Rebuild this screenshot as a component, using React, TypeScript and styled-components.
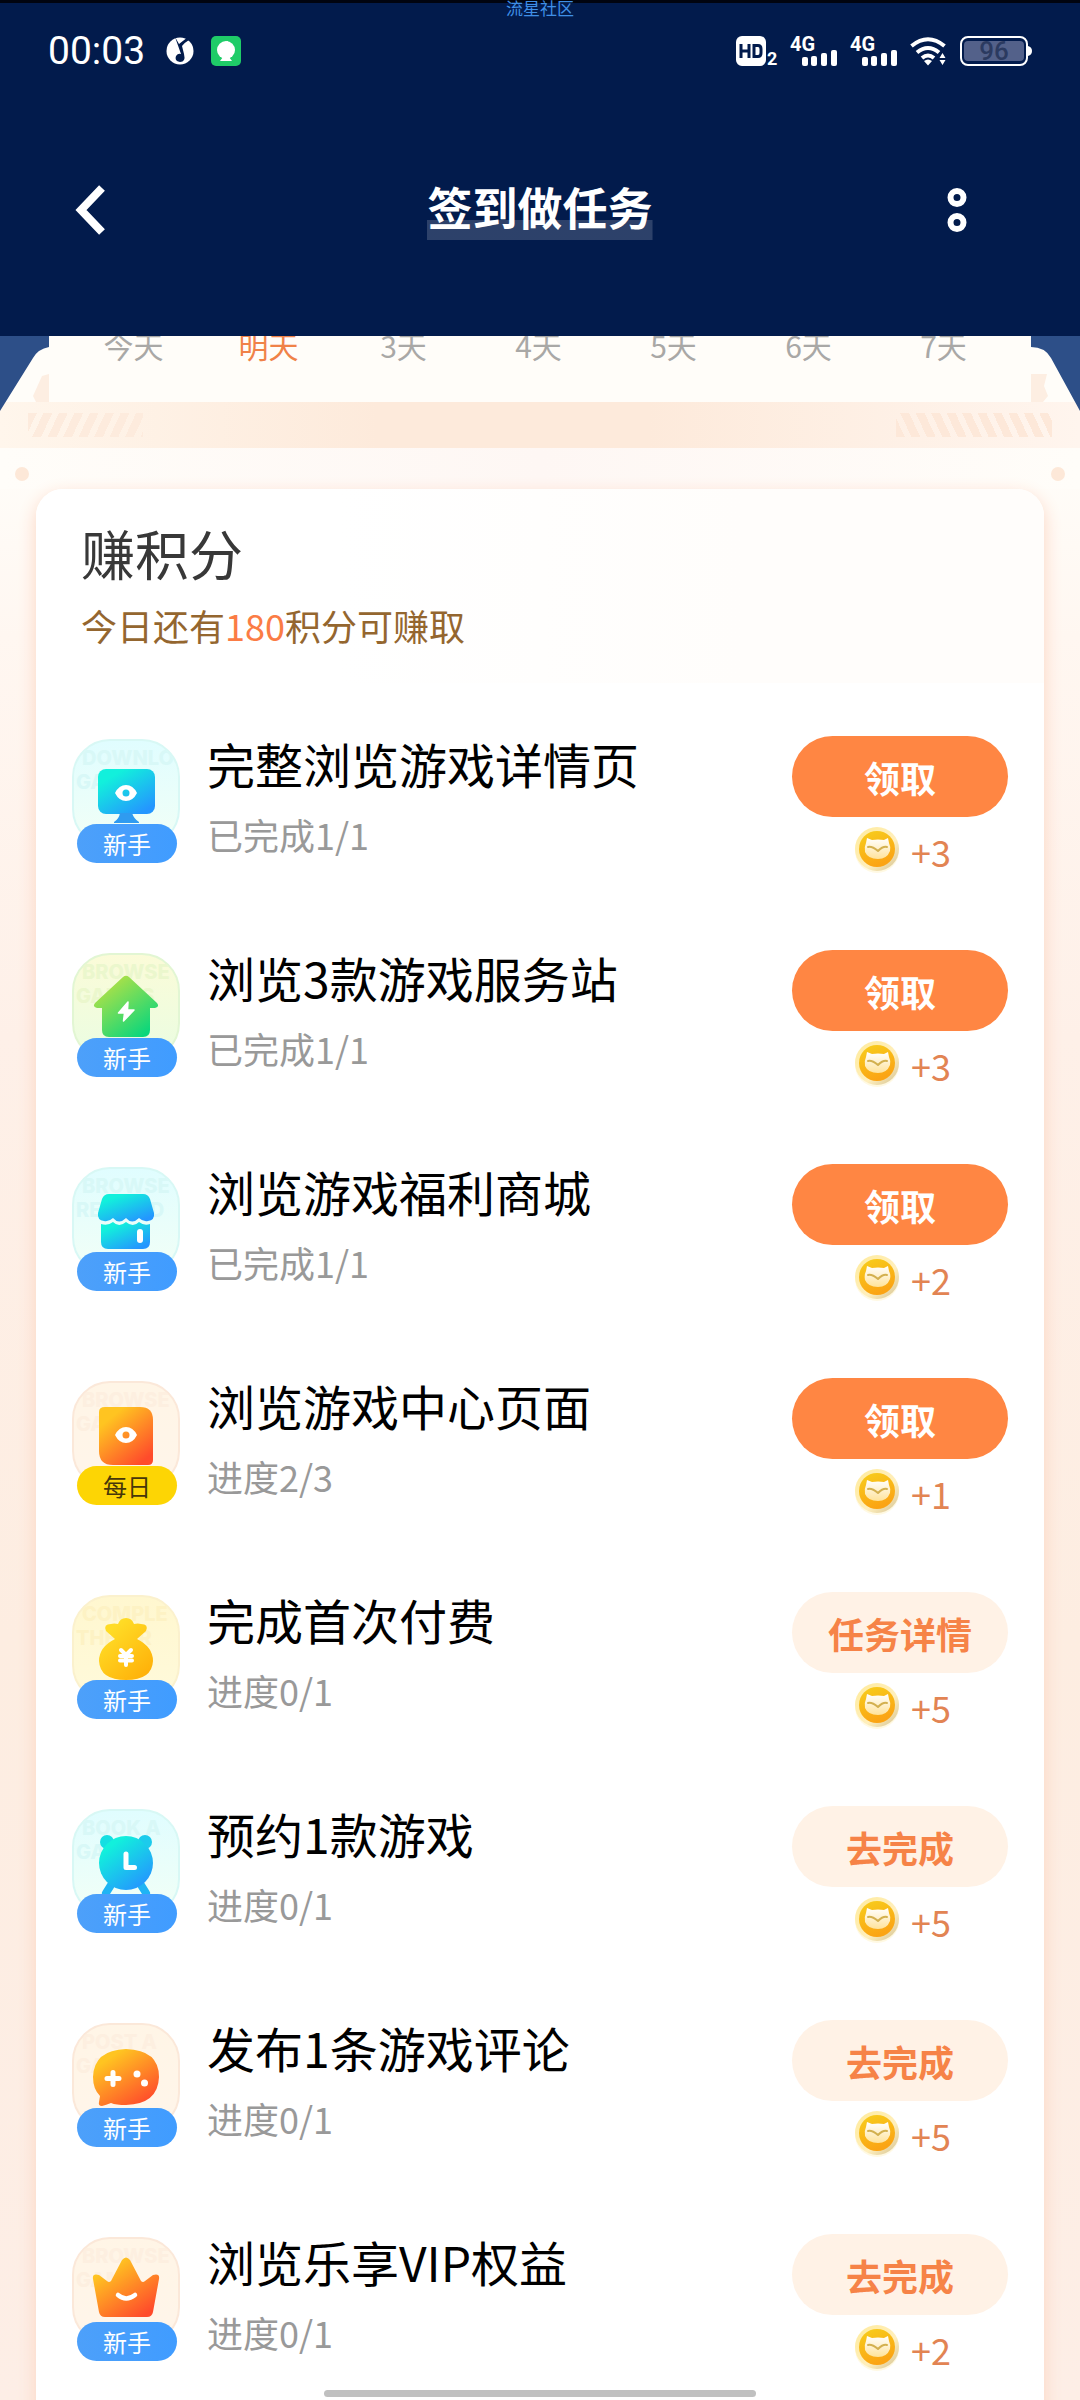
import React from 'react';
import styled, { createGlobalStyle } from 'styled-components';

const GlobalStyle = createGlobalStyle`
  * { box-sizing: border-box; }
  body {
    margin: 0;
    background: #fffaf6;
    font-family: "Noto Sans CJK SC", "Noto Sans", sans-serif;
  }
  button { font-family: inherit; border: 0; padding: 0; cursor: pointer; }
  h1, h2, h3, p, ul { margin: 0; padding: 0; font-weight: 400; }
`;

const Screen = styled.div`
  position: relative;
  display: flex;
  flex-direction: column;
  height: 100vh;
  overflow: hidden;
`;

const Header = styled.header`
  flex: none;
  height: 336px;
  background: #021b4c;
  border-top: 3px solid #01040f;
  color: #fff;
`;

const Watermark = styled.div`
  position: absolute;
  top: 0;
  left: 0;
  right: 0;
  text-align: center;
  font-size: 17px;
  line-height: 16px;
  color: #3f8fe6;
`;

const StatusBar = styled.div`
  display: flex;
  align-items: center;
  justify-content: space-between;
  height: 96px;
  padding: 0 48px;
`;

const StatusGroup = styled.div<{ $gap: number }>`
  display: flex;
  align-items: center;
  gap: ${(p) => p.$gap}px;

  svg { overflow: visible; }
`;

const Clock = styled.time`
  font-family: Roboto, sans-serif;
  font-size: 39px;
  line-height: 48px;
  margin-right: 4px;
`;

const NavBar = styled.div`
  display: grid;
  grid-template-columns: 120px 1fr 120px;
  align-items: center;
  height: 144px;
  margin-top: 39px;
  padding: 0 32px;
`;

const IconButton = styled.button`
  display: flex;
  align-items: center;
  justify-content: center;
  width: 84px;
  height: 84px;
  background: none;
`;

const BackButton = styled(IconButton)`
  margin-left: 16px;
`;

const MoreButton = styled(IconButton)`
  justify-self: end;
  margin-right: 49px;
`;

const PageTitle = styled.h1`
  justify-self: center;
  margin-bottom: 6px;
  font-size: 45px;
  line-height: 66px;
  font-weight: 700;
  background: linear-gradient(rgba(255, 255, 255, 0.17), rgba(255, 255, 255, 0.17)) bottom / 100% 20px no-repeat;
`;

const Content = styled.main`
  flex: 1;
  min-height: 0;
  overflow-y: auto;
  scrollbar-width: none;
  background: linear-gradient(#fffdf9 120px, #fff7f1 300px, #fef0e8 700px, #fdede1 1300px, #fdeee6);
`;

const DayStrip = styled.section`
  position: relative;
  z-index: 1;
  display: flex;
  height: 66px;
`;

const Wing = styled.svg`
  flex: none;
  width: 49px;
  height: 66px;
  overflow: visible;
`;

const Days = styled.ul`
  flex: 1;
  display: flex;
  align-items: flex-end;
  padding: 0 20px 42px 17px;
  overflow: hidden;
  background: #fffdf9;
  list-style: none;
`;

const Day = styled.li<{ $active?: boolean }>`
  flex: 1;
  text-align: center;
  font-size: 30px;
  line-height: 30px;
  color: ${(p) => (p.$active ? '#f08248' : '#a9a8a6')};
`;

const Ledge = styled.div`
  display: flex;
  align-items: center;
  justify-content: space-between;
  height: 46px;
  padding: 0 28px;
  background: linear-gradient(90deg, #fff6ec, #fdeadb 35%, #fdeadb 60%, #fff5ee);
`;

const Hatch = styled.div<{ $angle: number; $width: number; $color: string }>`
  width: ${(p) => p.$width}px;
  height: 24px;
  background: repeating-linear-gradient(
    ${(p) => p.$angle}deg,
    ${(p) => p.$color} 0 8px,
    transparent 8px 14px
  );
`;

const Rivets = styled.div`
  display: flex;
  align-items: center;
  justify-content: space-between;
  height: 41px;
  padding: 10px 15px 0;
  background: linear-gradient(90deg, #fffdf9, #fef7f4 50%, #fffdf9);
`;

const Rivet = styled.span`
  width: 14px;
  height: 14px;
  border-radius: 50%;
  background: #fde8d8;
`;

const Card = styled.section`
  margin: 0 36px;
  border-radius: 27px 27px 0 0;
  background: #fff;
  box-shadow: 0 6px 18px #fbd5c2;
`;

const CardHead = styled.div`
  padding: 31px 45px 54px;
  border-radius: 27px 27px 0 0;
  background: linear-gradient(90deg, #fff 30%, #fffdfb 70%) top / 100% 194px no-repeat;
`;

const Heading = styled.h2`
  font-size: 54px;
  line-height: 66px;
  color: #383838;
`;

const Summary = styled.p`
  margin-top: 12px;
  font-size: 36px;
  line-height: 54px;
  color: #94662f;
`;

const Points = styled.span`
  color: #fb7c45;
`;

const TaskList = styled.ul`
  list-style: none;
`;

const TaskRow = styled.li`
  display: grid;
  grid-template-columns: 108px 1fr 216px;
  column-gap: 27px;
  align-items: start;
  height: 214px;
  padding: 30px 36px 0;
`;

const TileWrap = styled.div`
  position: relative;
  height: 127px;
  padding-top: 3px;
`;

const Badge = styled.span<{ $daily?: boolean }>`
  position: absolute;
  left: 5px;
  right: 3px;
  bottom: 0;
  border-radius: 20px;
  text-align: center;
  font-size: 24px;
  line-height: 39px;
  color: ${(p) => (p.$daily ? '#47370a' : '#fff')};
  background: ${(p) => (p.$daily ? '#fdd504' : 'linear-gradient(90deg, #4da0fa, #409cff)')};
`;

const TaskTitle = styled.h3`
  font-size: 48px;
  line-height: 54px;
  color: #000;
  white-space: nowrap;
`;

const TaskProgress = styled.p`
  margin-top: 20px;
  font-size: 36px;
  line-height: 48px;
  color: #999;
`;

const ActionButton = styled.button<{ $ready: boolean }>`
  display: block;
  width: 100%;
  height: 81px;
  border-radius: 41px;
  font-size: 36px;
  line-height: 54px;
  font-weight: 700;
  color: ${(p) => (p.$ready ? '#fff' : '#f68347')};
  background: ${(p) => (p.$ready ? '#ff8643' : '#fff2e6')};
`;

const Reward = styled.div`
  display: flex;
  align-items: center;
  justify-content: center;
  gap: 10px;
  height: 48px;
  margin-top: 10px;
  padding-left: 4px;
  font-size: 36px;
  line-height: 48px;
  color: #e28453;
`;

const HomeIndicator = styled.div`
  position: absolute;
  bottom: 3px;
  left: 30%;
  right: 30%;
  height: 7px;
  border-radius: 4px;
  background: #c0c0c0;
`;

type Tone = 'cyan' | 'green' | 'orange' | 'gold';

const TONES: Record<Tone, { from: string; to: string; bg: string; bg2: string; line: string; ghost: string }> = {
  cyan: { from: '#12f0dc', to: '#2496ff', bg: '#e0fdff', bg2: '#f2fff6', line: '#d8f8f5', ghost: '#d8f8f7' },
  green: { from: '#a5e04a', to: '#0ad67c', bg: '#fbfbd8', bg2: '#eafde2', line: '#e2f6d3', ghost: '#ebf7cd' },
  orange: { from: '#ffc421', to: '#ff4b2b', bg: '#fff5e6', bg2: '#fff5ea', line: '#fbe8d9', ghost: '#fdefe0' },
  gold: { from: '#ffdc26', to: '#ffb20a', bg: '#fff7cf', bg2: '#fffadb', line: '#fbf1cd', ghost: '#fdf2c4' },
};

type Glyph = 'monitor' | 'house' | 'store' | 'page' | 'bag' | 'clock' | 'chat' | 'crown';

const Eye = () => (
  <path
    fill="#fff"
    fillRule="evenodd"
    d="M43 54 Q47 46 54 46 Q61 46 65 54 Q61 62 54 62 Q47 62 43 54Z M54 50.5 A3.5 3.5 0 1 0 54 57.5 A3.5 3.5 0 1 0 54 50.5Z"
  />
);

function glyphShape(glyph: Glyph, fill: string) {
  switch (glyph) {
    case 'monitor':
      return (
        <>
          <rect x="26" y="30" width="57" height="45" rx="8" fill={fill} />
          <path d="M48 74 H60 Q62 80 67 83 V84 H42 V83 Q47 80 48 74Z" fill="#2f9bf0" />
          <Eye />
        </>
      );
    case 'house':
      return (
        <>
          <path
            fill={fill}
            d="M51 24 Q54 21.500 57 24 L85 50 Q88 54 83 55 H78 V77 Q78 84 71 84 H37 Q30 84 30 77 V55 H25 Q20 54 23 50Z"
          />
          <path fill="#fff" stroke="#fff" strokeWidth="1.500" strokeLinejoin="round" d="M56 49 L46.500 60 H52.500 L51.500 68 L62 57 H55.500Z" />
        </>
      );
    case 'store':
      return (
        <>
          <path
            fill={fill}
            d="M37 27 H71 Q76 27 78 32 L82 46 Q83 53 76 54 Q71 55 67 51 Q60 58 54 51 Q47 58 41 51 Q37 55 32 54 Q25 53 26 46 L30 32 Q32 27 37 27Z"
          />
          <path
            fill={fill}
            d="M29 57 Q36 59 41 55 Q47 61 54 55 Q61 61 67 55 Q72 59 78 57 V75 Q78 82 71 82 H36 Q29 82 29 75Z"
          />
          <rect x="65" y="62" width="6" height="14" rx="3" fill="#fff" />
        </>
      );
    case 'page':
      return (
        <>
          <path fill={fill} d="M33 26 H68 Q81 26 81 39 V79 Q81 84 76 84 H41 Q27 84 27 70 V31 Q27 26 33 26Z" />
          <Eye />
        </>
      );
    case 'bag':
      return (
        <>
          <path
            fill={fill}
            d="M43 44 L34 36 Q31 29 39 29 Q42 28 46 29 Q48 23 54 23 Q60 23 62 29 Q66 28 69 29 Q77 29 74 36 L65 44 Q81 52 81 66 Q80 85 54 85 Q28 85 27 66 Q27 52 43 44Z"
          />
          <path
            d="M49 55 L54 60 L59 55 M48 61 H60 M48 65.500 H60 M54 60 V70"
            fill="none"
            stroke="#fff"
            strokeWidth="4"
            strokeLinecap="round"
          />
        </>
      );
    case 'clock':
      return (
        <>
          <path d="M39 76 L34 84 M69 76 L74 84" stroke="#1fb4f4" strokeWidth="8" strokeLinecap="round" />
          <circle cx="35" cy="33" r="7" fill="#14dfe2" />
          <circle cx="73" cy="33" r="7" fill="#1ccbec" />
          <circle cx="54" cy="54" r="27" fill={fill} />
          <path d="M54 45 V58.500 H62.500" fill="none" stroke="#fff" strokeWidth="5" strokeLinecap="round" strokeLinejoin="round" />
        </>
      );
    case 'chat':
      return (
        <>
          <path
            fill={fill}
            d="M54 26 Q87 27 87 54 Q86 81 54 82 Q44 82 39 80 Q34 82 30 83 Q26 83 27 79 L28 73 Q21 66 21 54 Q22 27 54 26Z"
          />
          <path d="M35 55.500 H47 M41 49.500 V61.500" stroke="#fff" strokeWidth="5" strokeLinecap="round" />
          <circle cx="65" cy="51" r="3.500" fill="#fff" />
          <circle cx="72.500" cy="60" r="3.500" fill="#fff" />
        </>
      );
    case 'crown':
      return (
        <>
          <path
            fill={fill}
            d="M50 23 Q54 18 58 23 L69 44 Q71 46 73 44 L81 38 Q88 36 87 42 L81 75 Q80 80 75 80 H33 Q28 80 27 75 L21 42 Q20 36 27 38 L35 44 Q37 46 39 44Z"
          />
          <path d="M46 58 Q54 65 63 58" fill="none" stroke="#fff" strokeWidth="4.500" strokeLinecap="round" />
        </>
      );
  }
}

function TaskIcon({ glyph, tone, ghost }: { glyph: Glyph; tone: Tone; ghost: [string, string] }) {
  const t = TONES[tone];
  return (
    <svg width="108" height="108" viewBox="0 0 108 108" aria-hidden="true">
      <defs>
        <linearGradient id={`fill-${glyph}`} x1="0.15" y1="0.1" x2="0.8" y2="0.95">
          <stop offset="0.1" stopColor={t.from} />
          <stop offset="1" stopColor={t.to} />
        </linearGradient>
        <linearGradient id={`tile-${glyph}`} x1="0" y1="0" x2="0" y2="1">
          <stop offset="0" stopColor={t.bg} />
          <stop offset="1" stopColor={t.bg2} />
        </linearGradient>
        <clipPath id={`clip-${glyph}`}>
          <rect x="2" y="2" width="104" height="104" rx="36" />
        </clipPath>
      </defs>
      <rect x="1" y="1" width="106" height="106" rx="37" fill={`url(#tile-${glyph})`} stroke={t.line} strokeWidth="2" />
      <g clipPath={`url(#clip-${glyph})`} fill={t.ghost} fontFamily="Inter, sans-serif" fontWeight="800" fontSize="20">
        <text x="10" y="26">{ghost[0]}</text>
        <text x="4" y="50">{ghost[1]}</text>
      </g>
      {glyphShape(glyph, `url(#fill-${glyph})`)}
    </svg>
  );
}

function Coin() {
  return (
    <svg width="48" height="48" viewBox="0 0 48 48" aria-hidden="true">
      <defs>
        <linearGradient id="coin-rim" x1="0" y1="0" x2="1" y2="1">
          <stop offset="0" stopColor="#ffeb9c" />
          <stop offset="0.6" stopColor="#ffefbd" />
          <stop offset="1" stopColor="#d3c090" />
        </linearGradient>
        <linearGradient id="coin-face" x1="0" y1="0" x2="0.4" y2="1">
          <stop offset="0" stopColor="#f7cf1c" />
          <stop offset="1" stopColor="#fba414" />
        </linearGradient>
        <linearGradient id="coin-cat" x1="0" y1="0" x2="0" y2="1">
          <stop offset="0" stopColor="#ffffff" />
          <stop offset="1" stopColor="#ffe39a" />
        </linearGradient>
      </defs>
      <circle cx="24" cy="24" r="22" fill="#fff9e3" />
      <circle cx="24" cy="22" r="22" fill="url(#coin-rim)" />
      <circle cx="24" cy="22" r="18" fill="url(#coin-face)" />
      <path d="M14 11 L19 13 Q25 12 31 13 L35 11 L36 16 Q38 20 37 24 Q34 32 25 32 Q15 32 12 25 Q11 20 13 16Z" fill="url(#coin-cat)" />
      <path d="M15 20 Q19 19 25 24 Q30 19 34 20" fill="none" stroke="#d3b04f" strokeWidth="2" strokeLinecap="round" strokeLinejoin="round" />
    </svg>
  );
}

function Signal() {
  return (
    <svg width="48" height="30" viewBox="0 0 48 30" aria-label="4G">
      <text x="0" y="15" fill="#fff" fontFamily="Roboto, sans-serif" fontWeight="700" fontSize="20">4G</text>
      <rect x="12" y="21" width="6" height="9" rx="2" fill="#fff" />
      <rect x="21" y="20" width="6" height="10" rx="2" fill="#fff" />
      <rect x="31" y="17" width="6" height="13" rx="2" fill="#fff" />
      <rect x="41" y="14" width="6" height="16" rx="2" fill="#fff" />
    </svg>
  );
}

interface Task {
  title: string;
  progress: string;
  badge: string;
  action: string;
  ready: boolean;
  reward: number;
  glyph: Glyph;
  tone: Tone;
  ghost: [string, string];
}

const TASKS: Task[] = [
  { title: '完整浏览游戏详情页', progress: '已完成1/1', badge: '新手', action: '领取', ready: true, reward: 3, glyph: 'monitor', tone: 'cyan', ghost: ['DOWNLO', 'GAME  F'] },
  { title: '浏览3款游戏服务站', progress: '已完成1/1', badge: '新手', action: '领取', ready: true, reward: 3, glyph: 'house', tone: 'green', ghost: ['BROWSE', 'GAME  S'] },
  { title: '浏览游戏福利商城', progress: '已完成1/1', badge: '新手', action: '领取', ready: true, reward: 2, glyph: 'store', tone: 'cyan', ghost: ['BROWSE', 'REWARD'] },
  { title: '浏览游戏中心页面', progress: '进度2/3', badge: '每日', action: '领取', ready: true, reward: 1, glyph: 'page', tone: 'orange', ghost: ['BROWSE', 'GAME'] },
  { title: '完成首次付费', progress: '进度0/1', badge: '新手', action: '任务详情', ready: false, reward: 5, glyph: 'bag', tone: 'gold', ghost: ['COMPLE', 'THE FIR'] },
  { title: '预约1款游戏', progress: '进度0/1', badge: '新手', action: '去完成', ready: false, reward: 5, glyph: 'clock', tone: 'cyan', ghost: ['BOOK A', 'GAME'] },
  { title: '发布1条游戏评论', progress: '进度0/1', badge: '新手', action: '去完成', ready: false, reward: 5, glyph: 'chat', tone: 'orange', ghost: ['POST A', 'GAME  R'] },
  { title: '浏览乐享VIP权益', progress: '进度0/1', badge: '新手', action: '去完成', ready: false, reward: 2, glyph: 'crown', tone: 'orange', ghost: ['BROWSE', 'GAME'] },
];

const DAYS = ['今天', '明天', '3天', '4天', '5天', '6天', '7天'];

export default function App() {
  return (
    <Screen>
      <GlobalStyle />
      <Header>
        <Watermark>流星社区</Watermark>
        <StatusBar>
          <StatusGroup $gap={17}>
            <Clock>00:03</Clock>
            <svg width="28" height="28" viewBox="0 0 28 28" aria-hidden="true">
              <circle cx="14" cy="14" r="13.500" fill="#fff" />
              <path d="M9 0 L13 7 L22 0 L23 3 Q18 6 16 9 L18 17 Q20 25 14 25 Q8 24 10 19 Q12 16 15 17Z" fill="#021b4c" />
            </svg>
            <svg width="30" height="30" viewBox="0 0 30 30" aria-hidden="true">
              <rect width="30" height="30" rx="5" fill="#1fcc68" />
              <circle cx="15" cy="14" r="9" fill="#fff" />
              <path d="M14 6 L17 5 L17 7 M12 21 H18 L21 25 H9Z" fill="#fff" />
            </svg>
          </StatusGroup>
          <StatusGroup $gap={12}>
            <svg width="42" height="30" viewBox="0 0 42 30" aria-label="HD 2">
              <rect width="30" height="30" rx="6" fill="#fff" />
              <path d="M5 8 V22 M13 8 V22 M5 15 H13 M18 9.500 V20.500 H22 Q25 20.500 25 17 V13 Q25 9.500 22 9.500Z" fill="none" stroke="#021b4c" strokeWidth="3" />
              <text x="31" y="29" fill="#fff" fontFamily="Roboto, sans-serif" fontWeight="700" fontSize="18">2</text>
            </svg>
            <Signal />
            <Signal />
            <svg width="38" height="30" viewBox="0 0 38 30" aria-hidden="true">
              <g fill="none" stroke="#fff" strokeWidth="4">
                <path d="M1.500 10 Q18 -3.500 34.500 10" />
                <path d="M7 16.500 Q18 7.500 29 16.500" />
                <path d="M12 22 Q18 17 24 22" />
              </g>
              <path d="M14 25 Q18 22 22 25 L18 29.500Z M29.500 22 L32.500 17 L35.500 22Z M29.500 24 L32.500 29 L35.500 24Z" fill="#fff" />
            </svg>
            <svg width="72" height="30" viewBox="0 0 72 30" aria-label="96%">
              <rect x="1" y="1" width="66" height="28" rx="7" fill="none" stroke="#fff" strokeWidth="2" />
              <rect x="4" y="5" width="60" height="20" rx="4" fill="#53618a" />
              <path d="M68 10 Q72 11 72 15 Q72 19 68 20Z" fill="#fff" />
              <text x="34" y="24" textAnchor="middle" fill="#2b3a60" fontFamily="Roboto, sans-serif" fontWeight="500" fontSize="26">96</text>
            </svg>
          </StatusGroup>
        </StatusBar>
        <NavBar>
          <BackButton type="button" aria-label="返回">
            <svg width="30" height="50" viewBox="0 0 30 50" fill="none" stroke="#fff" strokeWidth="8">
              <path d="M27 3 L6 25 L27 47" />
            </svg>
          </BackButton>
          <PageTitle>签到做任务</PageTitle>
          <MoreButton type="button" aria-label="更多">
            <svg width="20" height="44" viewBox="0 0 20 44" fill="none" stroke="#fff" strokeWidth="6">
              <circle cx="10" cy="9.500" r="6.500" />
              <circle cx="10" cy="34.500" r="6.500" />
            </svg>
          </MoreButton>
        </NavBar>
      </Header>

      <Content>
        <DayStrip>
          <Wing viewBox="0 0 49 66" aria-hidden="true">
            <path d="M49 38 L42 40 L33 60 L36 66 H49Z" fill="#fdeee2" />
            <path d="M0 0 H49 V11 Q38 13 33 22 L0 75Z" fill="#2d4f88" />
          </Wing>
          <Days>
            {DAYS.map((d, i) => (
              <Day key={d} $active={i === 1}>{d}</Day>
            ))}
          </Days>
          <Wing viewBox="0 0 49 66" aria-hidden="true">
            <path d="M0 38 H16 L13 50 L17 60 L12 66 H0Z" fill="#fdeee2" />
            <path d="M49 0 H0 V11 Q14 11 20 22 L49 75Z" fill="#2d4f88" />
          </Wing>
        </DayStrip>
        <Ledge>
          <Hatch $angle={115} $width={115} $color="#fdebdd" />
          <Hatch $angle={65} $width={156} $color="#fde8d9" />
        </Ledge>
        <Rivets>
          <Rivet />
          <Rivet />
        </Rivets>
        <Card>
          <CardHead>
            <Heading>赚积分</Heading>
            <Summary>今日还有<Points>180</Points>积分可赚取</Summary>
          </CardHead>
          <TaskList>
            {TASKS.map((task) => (
              <TaskRow key={task.title}>
                <TileWrap>
                  <TaskIcon glyph={task.glyph} tone={task.tone} ghost={task.ghost} />
                  <Badge $daily={task.badge === '每日'}>{task.badge}</Badge>
                </TileWrap>
                <div>
                  <TaskTitle>{task.title}</TaskTitle>
                  <TaskProgress>{task.progress}</TaskProgress>
                </div>
                <div>
                  <ActionButton type="button" $ready={task.ready}>{task.action}</ActionButton>
                  <Reward>
                    <Coin />
                    <span>+{task.reward}</span>
                  </Reward>
                </div>
              </TaskRow>
            ))}
          </TaskList>
        </Card>
      </Content>
      <HomeIndicator />
    </Screen>
  );
}
